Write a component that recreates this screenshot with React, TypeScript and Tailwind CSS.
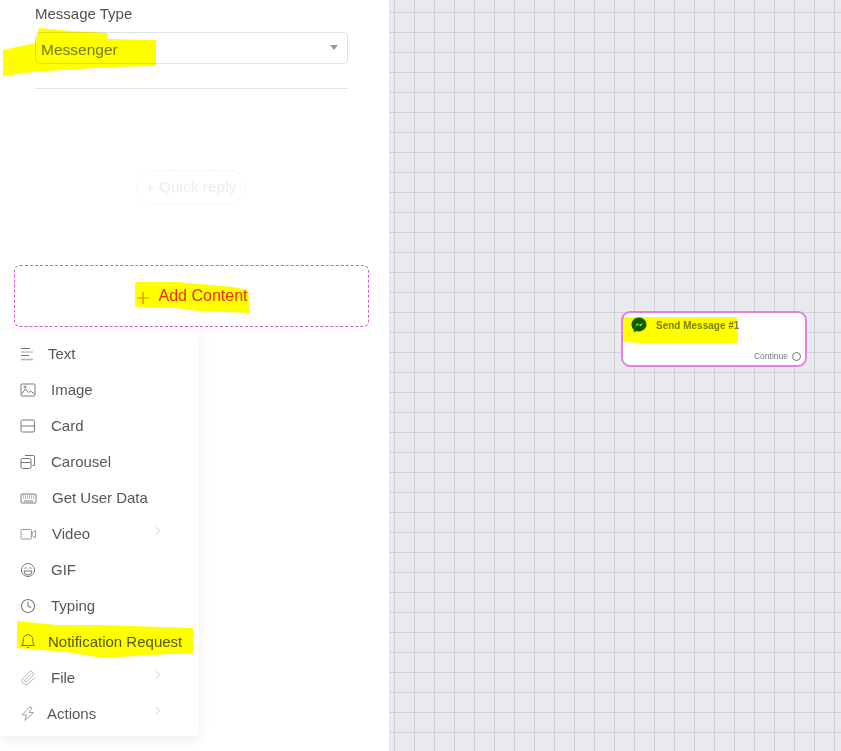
import { ChevronRight, Paperclip } from "lucide-react";
import type { ReactNode } from "react";

const icon = "w-[16px] h-[16px] text-[#77797c]";

const TextIcon = () => (
  <svg className={icon} viewBox="0 0 16 16" fill="none" stroke="currentColor" strokeWidth="1">
    <path d="M1 2.5h9M1 9.5h8" />
    <path d="M1 6h12" stroke="#a8a9ab" />
    <path d="M1 13.5h12" stroke="#b5b5b5" strokeWidth="1.6" />
  </svg>
);

const ImageIcon = () => (
  <svg className={icon} viewBox="0 0 16 16" fill="none" stroke="currentColor" strokeWidth="1">
    <rect x="1" y="2" width="14" height="12" rx="1" />
    <path d="M1.5 12 5.5 7l3 3.5 2-1.5 4 3" />
    <circle cx="5" cy="5" r="1" />
  </svg>
);

const CardIcon = () => (
  <svg className={icon} viewBox="0 0 16 16" fill="none" stroke="currentColor" strokeWidth="1">
    <rect x="1" y="2" width="13.5" height="12" rx="1.5" />
    <path d="M1 8h13.5" />
  </svg>
);

const CarouselIcon = () => (
  <svg className={icon} viewBox="0 0 16 16" fill="none" stroke="currentColor" strokeWidth="1">
    <rect x="1" y="4.5" width="10" height="10" rx="1.5" />
    <path d="M1 8.5h10M5 1.5h8.5a1 1 0 0 1 1 1v9h-2" />
  </svg>
);

const KeyboardIcon = () => (
  <svg className="h-[17px] w-[17px] text-[#77797c]" viewBox="0 0 17 17" fill="none" stroke="currentColor" strokeWidth="1">
    <rect x="1" y="4" width="15" height="9" rx="1" />
    <path d="M3 6h11M3 8h11" strokeDasharray="1 1" />
    <path d="M4 11h9" />
  </svg>
);

const VideoIcon = () => (
  <svg className="h-[17px] w-[17px] text-[#9a9b9d]" viewBox="0 0 17 17" fill="none" stroke="currentColor" strokeWidth="1">
    <rect x="1" y="3.5" width="10.5" height="9.5" rx="1" />
    <path d="m15.5 4.5-3.5 2.5v2.5l3.5 2.5z" />
  </svg>
);

const GifIcon = () => (
  <svg className={icon} viewBox="0 0 16 16" fill="none" stroke="currentColor" strokeWidth="1">
    <circle cx="8" cy="8" r="6.5" />
    <path d="M4.5 6.5 6 5.5l1 1M9 6.5l1-1 1.5 1" />
    <path d="M4 9h8a4 4 0 0 1-8 0z" />
  </svg>
);

const ClockIcon = () => (
  <svg className={icon} viewBox="0 0 16 16" fill="none" stroke="currentColor" strokeWidth="1.1">
    <circle cx="8" cy="8" r="6.5" />
    <path d="M8 3.8V8l3 1.7" />
  </svg>
);

const BellIcon = () => (
  <svg className={icon} viewBox="0 0 16 16" fill="none" stroke="currentColor" strokeWidth="1">
    <path d="M1.5 11.5c1.2-1 1.7-2 1.7-3.8V5.5a4.8 4.8 0 0 1 9.6 0v2.2c0 1.8.5 2.8 1.7 3.8z" />
    <path d="M7 13.5h2" />
  </svg>
);

const BoltIcon = () => (
  <svg className="h-[16px] w-[16px] text-[#a5a6a8]" viewBox="0 0 16 16" fill="none" stroke="currentColor" strokeWidth="1">
    <path d="M9 1.5 2 9h4.5L5 14.5 13.5 6.5H9l3-5z" />
  </svg>
);

const MessengerIcon = () => (
  <svg className="h-[16px] w-[16px]" viewBox="0 0 16 16">
    <path
      d="M8 .5C3.8.5.5 3.600.5 7.600c0 2.100.9 3.900 2.300 5.200v2.700l2.500-1.400c.8.2 1.700.3 2.700.3 4.200 0 7.500-3.100 7.500-6.800S12.200.5 8 .5z"
      fill="#0a5c3c"
    />
    <path d="m3.600 9.800 2.800-3.400 2.300 1.700 3.700-2.300-2.900 3.500-2.300-1.800z" fill="#ffffff" />
  </svg>
);

interface MenuItem {
  label: string;
  icon: ReactNode;
  gap: string;
  arrow?: boolean;
}

const items: MenuItem[] = [
  { label: "Text", icon: <TextIcon />, gap: "ml-[12px]" },
  { label: "Image", icon: <ImageIcon />, gap: "ml-[15px]" },
  { label: "Card", icon: <CardIcon />, gap: "ml-[15px]" },
  { label: "Carousel", icon: <CarouselIcon />, gap: "ml-[15px]" },
  { label: "Get User Data", icon: <KeyboardIcon />, gap: "ml-[15px]" },
  { label: "Video", icon: <VideoIcon />, gap: "ml-[15px]", arrow: true },
  { label: "GIF", icon: <GifIcon />, gap: "ml-[15px]" },
  { label: "Typing", icon: <ClockIcon />, gap: "ml-[15px]" },
  { label: "Notification Request", icon: <BellIcon />, gap: "ml-[12px]" },
  {
    label: "File",
    icon: <Paperclip className="h-[16px] w-[16px] text-[#a5a6a8]" strokeWidth={1.2} />,
    gap: "ml-[15px]",
    arrow: true,
  },
  { label: "Actions", icon: <BoltIcon />, gap: "ml-[11px]", arrow: true },
];

export default function App() {
  return (
    <div className="relative flex h-[751px] w-[841px] overflow-hidden bg-white font-['Liberation_Sans',Arial,sans-serif]">
      {/* Left panel */}
      <div className="w-[389px] shrink-0 bg-white">
        <div className="px-[35px] pt-[5px]">
          <div className="h-[18px] text-[15px] leading-[18px] text-[#4f5255]">Message Type</div>
          <div className="mt-[9px] flex h-[32px] w-[313px] items-center justify-between rounded-[4px] border border-[#dfe1e4] pl-[5px] pr-[9px] text-[15.5px] text-[#77797c]">
            <span className="pt-[3px]">Messenger</span>
            <span className="mb-[2px] h-0 w-0 border-x-[4px] border-t-[5px] border-x-transparent border-t-[#98999c]" />
          </div>
          <div className="mt-[24px] h-px w-[313px] bg-[#e0e2e4]" />
        </div>
        <div className="ml-[136px] mt-[81px] flex h-[34px] w-[110px] items-center justify-center rounded-full border border-dashed border-[#f1f2f3] text-[15.5px] text-[#ecedef]">
          + Quick reply
        </div>
        <div className="mx-[14px] mt-[61px] flex h-[62px] w-[355px] items-center justify-center rounded-[6px] border border-dashed border-[#d35bcf]">
          <div className="flex items-center">
            <svg className="mt-[3px] h-[14px] w-[14px] text-[#f07a00]" viewBox="0 0 14 14" fill="none" stroke="currentColor" strokeWidth="1.2">
              <path d="M7 1v12M1 7h12" />
            </svg>
            <span className="ml-[9px] text-[16px] text-[#ef2d12]">Add Content</span>
          </div>
        </div>
        {/* Dropdown menu */}
        <div className="mt-[3px] h-[406px] w-[199px] rounded-br-[3px] bg-white py-[6px] shadow-[0_3px_14px_rgba(0,0,0,0.08)]">
          {items.map((item) => (
            <div key={item.label} className="relative flex h-[36px] items-center pl-[20px] text-[15px] text-[#55575a]">
              {item.icon}
              <span className={item.gap}>{item.label}</span>
              {item.arrow && (
                <ChevronRight className="absolute left-[151px] top-[8px] h-[14px] w-[14px] text-[#a5a6a8]" strokeWidth={1} />
              )}
            </div>
          ))}
        </div>
      </div>

      {/* Flow canvas */}
      <div className="relative flex-1 bg-[#e8eaed] bg-[linear-gradient(#ced1d5_1px,transparent_1px),linear-gradient(90deg,#ced1d5_1px,transparent_1px)] bg-[length:20px_20px] bg-[position:5px_12px]">
        <div className="absolute left-[232px] top-[311px] h-[56px] w-[186px] rounded-[9px] border-2 border-[#e77fe0] bg-white">
          <div className="absolute left-[8px] top-[4px] flex items-center">
            <MessengerIcon />
            <span className="ml-[9px] text-[10px] font-bold text-[#7c7c7c]">Send Message #1</span>
          </div>
          <div className="absolute bottom-[2px] right-[4px] flex items-center text-[8.5px] text-[#74767a]">
            Continue
            <span className="ml-[4px] h-[9px] w-[9px] rounded-full border border-[#74767a]" />
          </div>
        </div>
      </div>

      {/* Highlighter marks painted over the screenshot */}
      <svg className="pointer-events-none absolute left-0 top-0 h-[751px] w-[841px] mix-blend-multiply" viewBox="0 0 841 751" fill="#ffff00">
        <polygon points="39,28 70,31 107,33 108,39 156,40 156,66 110,67 33,72 3,76 3,50 35,43" />
        <polygon points="135,282 177,282 233,287 248,290 250,313 200,311 175,308 135,307" />
        <polygon points="17,621 57,625 100,625 193,628 193,653 150,655 103,658 67,652 17,648" />
        <polygon points="623,317 737,317 737,343 640,343 623,342" />
      </svg>
    </div>
  );
}
